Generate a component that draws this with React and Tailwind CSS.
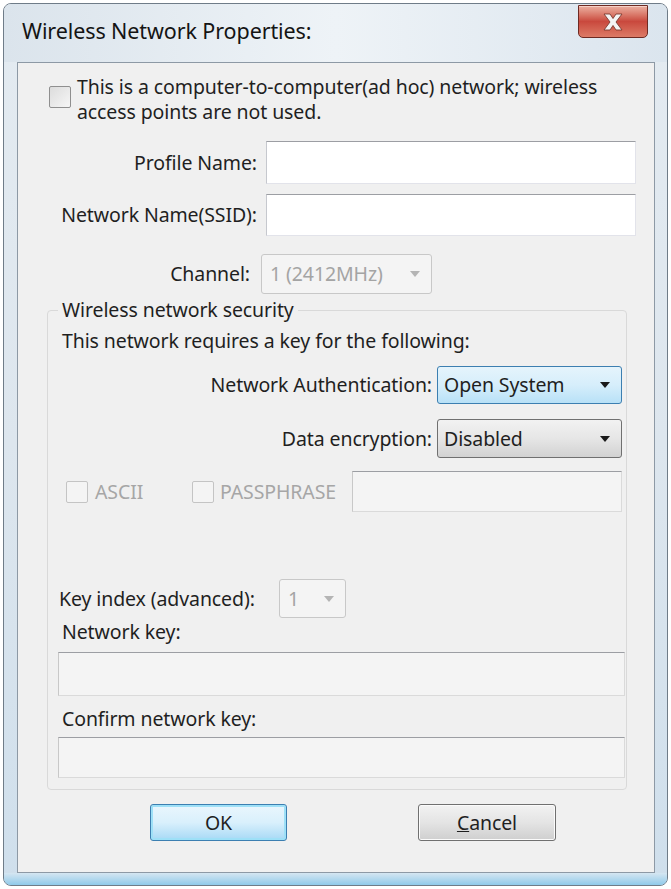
import React from "react";

const FONT = { fontFamily: '"Noto Sans", "Open Sans", sans-serif' };

function Arrow({ disabled }) {
  return (
    <svg width="12" height="8" viewBox="0 0 12 8" className="shrink-0">
      <path d="M1 1 L11 1 L6 7 Z" fill={disabled ? "#b4b4b4" : "#1a1a1a"} />
    </svg>
  );
}

function Check({ disabled, className = "" }) {
  return (
    <div
      className={
        "w-[22px] h-[22px] shrink-0 rounded-[2px] border " +
        (disabled
          ? "border-[#c4c4c4] bg-[#f4f4f4] "
          : "border-[#8f8f8f] bg-gradient-to-br from-[#dcdcdc] to-[#f6f6f6] ") +
        className
      }
    />
  );
}

function TextBox({ className = "", disabled }) {
  return (
    <div
      className={
        "border border-t-[#9c9ea3] " +
        (disabled
          ? "bg-[#f4f4f4] border-[#dadada] border-l-[#c8c8c8] "
          : "bg-white border-[#e2e3ea] border-l-[#c6c8ce] ") +
        className
      }
    />
  );
}

function DisabledSelect({ value, className = "" }) {
  return (
    <div
      className={
        "flex items-center justify-between rounded-[3px] border border-[#c8c8c8] bg-[#f4f4f4] pl-[8px] pr-[10px] text-[#a4a4a4] " +
        className
      }
    >
      <span>{value}</span>
      <Arrow disabled />
    </div>
  );
}

export default function App() {
  return (
    <div className="w-[671px] h-[889px] bg-white text-[19.5px] text-[#1f1f1f] leading-[24px] tracking-[-0.1px]" style={FONT}>
      <div className="ml-[3px] mt-[3px] w-[665px] h-[883px] rounded-[8px] border border-[#6f7c88] bg-gradient-to-b from-[#e4ebf1] via-[#dde6ee] to-[#cfdfec] flex flex-col overflow-hidden">
        {/* title bar */}
        <div className="h-[58px] flex items-start justify-between pl-[18px] pr-[19px] bg-gradient-to-r from-[#dbe4ec] via-[#eef3f7] to-[#dbe5ee]">
          <div className="mt-[15px] text-[21.5px] text-[#141414]">Wireless Network Properties:</div>
          <div className="mt-[1px] w-[70px] h-[33px] rounded-b-[5px] border border-[#6e2a22] bg-gradient-to-b from-[#eab0a2] via-[#c9483d] to-[#dc7a66] shadow-[inset_0_1px_0_#f6d0c6] flex items-center justify-center">
            <svg width="24" height="18" viewBox="0 0 24 18">
              <path
                d="M3 1 L9 1 L12 5.5 L15 1 L21 1 L15 9 L21 17 L15 17 L12 12.5 L9 17 L3 17 L9 9 Z"
                fill="#f4f4f4"
                stroke="#7b3a30"
                strokeWidth="0.9"
              />
            </svg>
          </div>
        </div>

        {/* client area */}
        <div className="ml-[13px] mr-[12px] h-[811px] border border-[#8d99a5] bg-[#f0f0f0] flex flex-col">
          {/* ad hoc */}
          <div className="mt-[11px] flex items-start pl-[31px]">
            <Check className="mt-[12px]" />
            <div className="ml-[6px] leading-[25px]">
              This is a computer-to-computer(ad hoc) network; wireless
              <br />
              access points are not used.
            </div>
          </div>

          <div className="mt-[17px] flex items-center">
            <div className="w-[239px] text-right">Profile Name:</div>
            <TextBox className="ml-[9px] w-[370px] h-[43px]" />
          </div>

          <div className="mt-[10px] flex items-center">
            <div className="w-[239px] text-right">Network Name(SSID):</div>
            <TextBox className="ml-[9px] w-[370px] h-[42px]" />
          </div>

          <div className="mt-[18px] flex items-center">
            <div className="w-[232px] text-right">Channel:</div>
            <DisabledSelect value="1 (2412MHz)" className="ml-[11px] w-[171px] h-[40px]" />
          </div>

          {/* security group */}
          <fieldset className="mt-[4px] ml-[29px] w-[580px] rounded-[4px] border border-[#d9d9d9] pb-[11px]">
            <legend className="ml-[10px] px-[4px]">Wireless network security</legend>

            <div className="mt-[7px] pl-[14px]">This network requires a key for the following:</div>

            <div className="mt-[13px] flex items-center justify-end pr-[4px]">
              <div>Network Authentication:</div>
              <div className="ml-[5px] w-[185px] h-[38px] rounded-[3px] border border-[#3c7fb1] bg-gradient-to-b from-[#e5f4fc] via-[#d6eefb] to-[#b8e1f7] flex items-center justify-between pl-[6px] pr-[10px]">
                <span>Open System</span>
                <Arrow />
              </div>
            </div>

            <div className="mt-[15px] flex items-center justify-end pr-[4px]">
              <div>Data encryption:</div>
              <div className="ml-[5px] w-[185px] h-[39px] rounded-[3px] border border-[#707070] bg-gradient-to-b from-[#f2f2f2] via-[#e6e6e6] to-[#d2d2d2] flex items-center justify-between pl-[6px] pr-[10px]">
                <span>Disabled</span>
                <Arrow />
              </div>
            </div>

            <div className="mt-[13px] flex items-center pl-[18px] pr-[4px] text-[#a6a6a6]">
              <Check disabled />
              <span className="ml-[7px] w-[97px]">ASCII</span>
              <Check disabled />
              <span className="ml-[6px]">PASSPHRASE</span>
              <TextBox disabled className="ml-auto w-[270px] h-[41px]" />
            </div>

            <div className="mt-[67px] flex items-center pl-[11px]">
              <div className="w-[220px]">Key index (advanced):</div>
              <DisabledSelect value="1" className="w-[67px] h-[39px]" />
            </div>

            <div className="mt-[2px] pl-[14px]">Network key:</div>
            <TextBox disabled className="mt-[8px] ml-[10px] w-[567px] h-[44px]" />

            <div className="mt-[11px] pl-[14px]">Confirm network key:</div>
            <TextBox disabled className="mt-[6px] ml-[10px] w-[567px] h-[41px]" />
          </fieldset>

          {/* buttons */}
          <div className="mt-[14px] flex items-center">
            <button className="ml-[132px] w-[137px] h-[37px] rounded-[3px] border border-[#3c7fb1] bg-gradient-to-b from-[#eaf6fd] via-[#d9f0fc] to-[#a7d9f5] shadow-[inset_0_0_0_2px_#9ee0f7]">
              OK
            </button>
            <button className="ml-[131px] w-[138px] h-[37px] rounded-[3px] border border-[#707070] bg-gradient-to-b from-[#f2f2f2] via-[#e4e4e4] to-[#cfcfcf] shadow-[inset_0_0_0_1px_#fbfbfb]">
              <span className="underline">C</span>ancel
            </button>
          </div>
        </div>

        {/* bottom frame */}
        <div className="flex-1 bg-gradient-to-b from-[#d5e6f1] to-[#8fcaea]" />
      </div>
    </div>
  );
}
